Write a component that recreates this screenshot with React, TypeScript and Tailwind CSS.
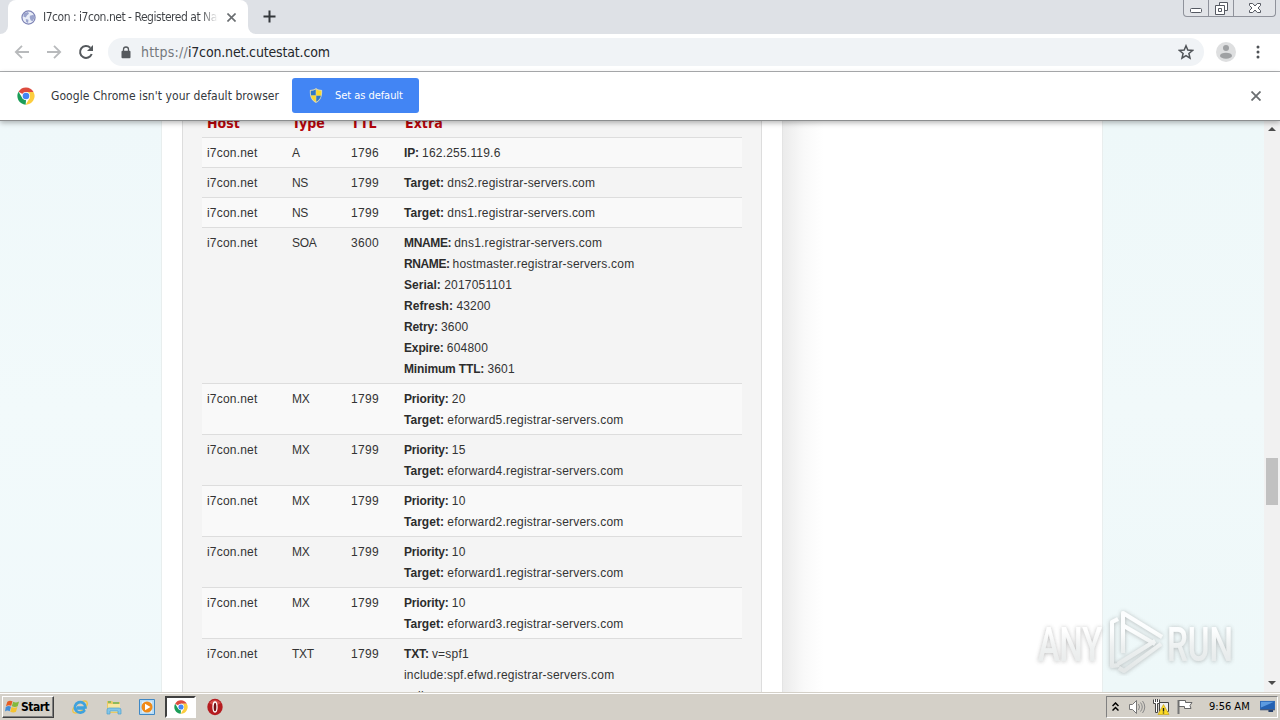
import type { ReactNode } from "react";

type Entry = { label?: string; value: string };

const records: { type: string; ttl: string; extra: Entry[] }[] = [
  { type: "A", ttl: "1796", extra: [{ label: "IP:", value: "162.255.119.6" }] },
  { type: "NS", ttl: "1799", extra: [{ label: "Target:", value: "dns2.registrar-servers.com" }] },
  { type: "NS", ttl: "1799", extra: [{ label: "Target:", value: "dns1.registrar-servers.com" }] },
  {
    type: "SOA",
    ttl: "3600",
    extra: [
      { label: "MNAME:", value: "dns1.registrar-servers.com" },
      { label: "RNAME:", value: "hostmaster.registrar-servers.com" },
      { label: "Serial:", value: "2017051101" },
      { label: "Refresh:", value: "43200" },
      { label: "Retry:", value: "3600" },
      { label: "Expire:", value: "604800" },
      { label: "Minimum TTL:", value: "3601" },
    ],
  },
  ...[
    ["20", "eforward5"],
    ["15", "eforward4"],
    ["10", "eforward2"],
    ["10", "eforward1"],
    ["10", "eforward3"],
  ].map(([priority, host]) => ({
    type: "MX",
    ttl: "1799",
    extra: [
      { label: "Priority:", value: priority },
      { label: "Target:", value: `${host}.registrar-servers.com` },
    ],
  })),
  {
    type: "TXT",
    ttl: "1799",
    extra: [
      { label: "TXT:", value: "v=spf1" },
      { value: "include:spf.efwd.registrar-servers.com" },
      { value: "~all" },
    ],
  },
];

const labelTracking: Record<string, string> = {
  "MNAME:": "tracking-[-0.35px]",
  "RNAME:": "tracking-[-0.4px]",
  "Target:": "tracking-[0.02px]",
  "Serial:": "tracking-[0.02px]",
  "Refresh:": "tracking-[0.04px]",
};

const ChromeLogo = ({ className }: { className?: string }) => (
  <svg viewBox="0 0 24 24" className={className}>
    <path d="M12 12 2 6.3A11.5 11.5 0 0 1 22 6.5H12z" fill="#dd4b3e" />
    <path d="M12 6.5h10A11.5 11.5 0 0 1 11.5 23.5L17 14.5z" fill="#fccd3f" />
    <path d="M2 6.3 7.2 15l4.8 2.5-.5 6A11.500 11.500 0 0 1 2 6.300z" fill="#1b9d58" />
    <circle cx="12" cy="12" r="5.4" fill="#fff" />
    <circle cx="12" cy="12" r="4.4" fill="#4486f4" />
  </svg>
);

const Cross = ({ className }: { className?: string }) => (
  <svg viewBox="0 0 10 10" className={className} fill="none" stroke="#6a6e71" strokeWidth="1.8">
    <path d="m.5.5 9 9M9.500.5l-9 9" />
  </svg>
);

const TabStrip = () => (
  <div className="flex h-[34px] shrink-0 justify-between bg-[#dee1e6]">
    <div className="flex">
      <div className="flex w-2 flex-col justify-end bg-white">
        <div className="h-full rounded-br-lg bg-[#dee1e6]" />
      </div>
      <div className="flex w-60 items-center rounded-t-lg bg-white pl-[13px]">
        <svg viewBox="0 0 16 16" className="h-[15px] w-[15px] shrink-0">
          <circle cx="8" cy="8" r="7" fill="#e9edf7" stroke="#7d83b5" strokeWidth="1.3" />
          <path d="M3 3.5 7.5 2l1 2-2 1.5L5 8 2.5 7zM9.5 6l4-1 .8 3.5-2 3.5-2-1-1-3zM5 9.5l3 1-.5 3.3-2-1z" fill="#9aa3cc" />
        </svg>
        <div className="ml-[7px] w-[175px] overflow-hidden whitespace-nowrap bg-linear-to-r from-[#3f4246] from-90% to-transparent bg-clip-text font-['DejaVu_Sans_Condensed',sans-serif] text-[12px] tracking-[-0.48px] text-transparent">
          I7con : i7con.net - Registered at Namecheap
        </div>
        <Cross className="ml-[9px] h-[9px] w-[9px]" />
      </div>
      <div className="w-2 bg-white">
        <div className="h-full rounded-bl-lg bg-[#dee1e6]" />
      </div>
      <svg viewBox="0 0 13 13" className="ml-[7px] mt-[10px] h-[13px] w-[13px]" stroke="#33373b" strokeWidth="2">
        <path d="M6.500 0.500v12M0.500 6.500h12" />
      </svg>
    </div>
    <div className="mr-[4px] flex h-[17px] w-[93px] rounded-b border border-t-0 border-[#8f929b] bg-[#e2e4e8]">
      <div className="flex w-[25px] justify-center border-r border-[#8f929b]">
        <svg viewBox="0 0 12 16" className="h-4 w-3">
          <rect x="0.5" y="8.500" width="11" height="4" rx="1" fill="#fff" stroke="#555962" />
        </svg>
      </div>
      <div className="flex w-[25px] justify-center border-r border-[#8f929b]">
        <svg viewBox="0 0 13 16" className="h-4 w-[13px]" fill="#fff" stroke="#555962">
          <path d="M4.500 2.500h8v8h-8z" />
          <path d="M.5 5.500h9v9h-9z" />
          <path d="M3.500 8.500h3v3h-3z" />
        </svg>
      </div>
      <div className="flex flex-1 justify-center">
        <svg viewBox="0 0 12 16" className="h-4 w-3">
          <path d="M.5 3.500h3.200L6 6l2.300-2.500h3.200v2L9 8l2.500 2.500v2H8.300L6 10l-2.300 2.500H.5v-2L3 8 .5 5.500z" fill="#fff" stroke="#555962" />
        </svg>
      </div>
    </div>
  </div>
);

const Toolbar = () => (
  <div className="flex h-[38px] shrink-0 items-center border-b border-[#adafb1] bg-white pb-px">
    <svg viewBox="0 0 16 16" className="ml-[14px] h-4 w-4" fill="none" stroke="#b8babc" strokeWidth="1.8">
      <path d="M15 8H2M8 1.800 1.800 8 8 14.200" />
    </svg>
    <svg viewBox="0 0 16 16" className="ml-4 h-4 w-4" fill="none" stroke="#b8babc" strokeWidth="1.8">
      <path d="M1 8h13M8 1.800 14.200 8 8 14.200" />
    </svg>
    <svg viewBox="0 0 16 16" className="ml-4 h-4 w-4" fill="none" stroke="#55595d" strokeWidth="2">
      <path d="M13.700 10A6 6 0 1 1 12.300 3.700" />
      <path d="M15 1v6H9z" fill="#55595d" stroke="none" />
    </svg>
    <div className="ml-[14px] flex h-7 w-[1096px] items-center rounded-full bg-[#f0f3f6] pl-[13px] pr-[10px]">
      <svg viewBox="0 0 10 13" className="h-[13px] w-[10px]">
        <path d="M2.500 5.500V3.500a2.500 2.500 0 0 1 5 0v2" fill="none" stroke="#55595d" strokeWidth="1.3" />
        <rect x="0.500" y="4.800" width="9" height="7.500" rx="1" fill="#55595d" />
      </svg>
      <div className="ml-[10px] whitespace-nowrap font-['DejaVu_Sans_Condensed',sans-serif] text-[14px] tracking-[-0.16px] text-[#24272b]">
        <span className="tracking-[0.22px] text-[#74787d]">https://</span>i7con.net.cutestat.com
      </div>
      <svg viewBox="0 0 16 16" className="ml-auto h-4 w-4" fill="none" stroke="#505458" strokeWidth="1.5">
        <path d="m8 1.800 1.800 4.300 4.700.4-3.600 3 1.100 4.600-4-2.500-4 2.500 1.100-4.600-3.600-3 4.700-.4z" />
      </svg>
    </div>
    <svg viewBox="0 0 20 20" className="ml-3 h-5 w-5">
      <circle cx="10" cy="10" r="10" fill="#dedfe0" />
      <circle cx="10" cy="6" r="3" fill="#9fa1a3" />
      <ellipse cx="10" cy="13.700" rx="6" ry="3" fill="#9fa1a3" />
    </svg>
    <svg viewBox="0 0 4 14" className="ml-[20px] h-[14px] w-1" fill="#4e5256">
      <circle cx="2" cy="2" r="1.500" />
      <circle cx="2" cy="7" r="1.500" />
      <circle cx="2" cy="12" r="1.500" />
    </svg>
  </div>
);

const InfoBar = () => (
  <div className="relative z-10 flex h-[49px] shrink-0 items-center border-b border-[#8c8e8f] bg-white pb-px font-['DejaVu_Sans_Condensed',sans-serif] shadow-[0_2px_5px_rgba(0,0,0,0.28)]">
    <ChromeLogo className="ml-[17px] h-[18px] w-[18px]" />
    <div className="ml-4 w-[241px] whitespace-nowrap text-[12px] tracking-[0.06px] text-[#34383c]">
      Google Chrome isn't your default browser
    </div>
    <button className="flex h-[35px] w-[127px] items-center rounded-[3px] bg-[#4285f4] pl-[17px] text-white">
      <svg viewBox="0 0 14 16" className="h-[15px] w-[14px]">
        <path d="M7 0c2 1.500 4 2 6.500 2C14 9 12 13 7 16 2 13 0 9 .5 2 3 2 5 1.500 7 0z" fill="#d9d7b5" />
        <path d="M6.700 1.600V8H1.700C1.400 6 1.400 4.500 1.500 3c2 0 3.700-.4 5.200-1.400zM7.300 8h5c-.6 3-2.200 5-5 6.700z" fill="#2f78c8" />
        <path d="M7.300 1.600V8h5c.3-2 .3-3.500.2-5-2 0-3.700-.4-5.200-1.400zM6.700 8h-5c.6 3 2.200 5 5 6.700z" fill="#f9d92e" />
      </svg>
      <span className="ml-3 mt-px whitespace-nowrap text-[11px] tracking-[-0.05px]">Set as default</span>
    </button>
    <Cross className="ml-auto mr-[19px] h-[10px] w-[10px]" />
  </div>
);

const columns = "grid grid-cols-[85px_59px_53px_1fr] pl-[5px]";

const DnsTable = () => (
  <div className="-mt-[14px] w-[540px] font-['Liberation_Sans',Arial,sans-serif] text-[12px] leading-[21px] tracking-[0.2px] text-[#333]">
    <div className={`${columns} h-[30px] pt-[6px] font-['DejaVu_Sans_Condensed',Tahoma,sans-serif] text-[14px] font-bold tracking-[0.05px] text-[#b5050b]`}>
      <span>Host</span>
      <span>Type</span>
      <span>TTL</span>
      <span className="pl-px">Extra</span>
    </div>
    {records.map((record, index) => (
      <div key={index} className={`${columns} border-t border-[#ddd] pb-[3px] pt-[5px] ${index % 2 === 0 ? "bg-[#f9f9f9]" : ""}`}>
        <span>i7con.net</span>
        <span className="tracking-[-0.3px]">{record.type}</span>
        <span className="tracking-[0.33px]">{record.ttl}</span>
        <div className="whitespace-nowrap">
          {record.extra.map((entry, i) => (
            <div key={i}>
              {entry.label && (
                <b className={`text-[#2c2c2c] ${labelTracking[entry.label] ?? "tracking-[-0.15px]"}`}>{entry.label} </b>
              )}
              {entry.value}
            </div>
          ))}
        </div>
      </div>
    ))}
  </div>
);

const Watermark = () => (
  <svg viewBox="0 0 204 72" className="absolute left-[1034px] top-[483px] h-[72px] w-[204px]">
    <defs>
      <linearGradient id="fade" gradientUnits="userSpaceOnUse" x1="0" y1="6" x2="0" y2="66">
        <stop offset="0.350" stopColor="#fff" />
        <stop offset="0.600" stopColor="#eef0f0" />
        <stop offset="1" stopColor="#e2e5e5" />
      </linearGradient>
      <filter id="glow" x="-10%" y="-20%" width="120%" height="140%">
        <feDropShadow dx="0" dy="0.5" stdDeviation="2" floodColor="#777" floodOpacity="0.600" />
      </filter>
    </defs>
    <g filter="url(#glow)" opacity="0.850">
      <text x="4" y="57" textLength="64" lengthAdjust="spacingAndGlyphs" fontFamily="Roboto" fontSize="49" fontWeight="500" fill="url(#fade)">ANY</text>
      <text x="133" y="57" textLength="66" lengthAdjust="spacingAndGlyphs" fontFamily="Roboto" fontSize="49" fontWeight="500" fill="url(#fade)">RUN</text>
      <g fill="none" stroke="url(#fade)" strokeWidth="4" strokeLinejoin="round">
        <path d="M84 15 78 18v44l7-1M89 49V9l39 24M90 22l31 18M121 37 84 60M127 40 90 67l-5-3" />
      </g>
    </g>
  </svg>
);

const Scrollbar = () => (
  <div className="flex w-4 flex-col items-center bg-[#f1f1f1]">
    <svg viewBox="0 0 8 4" className="mt-[6px] h-1 w-2"><path d="M0 4 4 0l4 4z" fill="#4c4c4c" /></svg>
    <div className="mt-[327px] h-[47px] w-3 bg-[#c1c1c1]" />
    <svg viewBox="0 0 8 4" className="mb-[7px] mt-auto h-1 w-2"><path d="m0 0 4 4 4-4z" fill="#4c4c4c" /></svg>
  </div>
);

const Page = () => (
  <div className="relative flex min-h-0 flex-1 overflow-hidden bg-[#eff8fa]">
    <div className="w-[162px] border-r border-[#e8eeee] bg-linear-to-b from-[#eff8fa] via-[#f2fafb] to-[#f0f9fb]" />
    <div className="flex w-[940px] bg-white pl-5">
      <div className="w-[580px] border-x border-[#ddd] bg-[#f4f4f4] pl-[19px]">
        <DnsTable />
      </div>
      <div className="w-5" />
      <div className="w-[42px] border-l border-[#e4e4e4] bg-linear-to-r from-[#ebebeb] via-[#f9f9f9] to-white" />
    </div>
    <div className="flex-1 border-l border-[#e9eeee] bg-linear-to-b from-[#eef8f9] via-[#f1f9fa] to-[#eef8f9]" />
    <Scrollbar />
    <Watermark />
  </div>
);

const Icon = ({ className, children }: { className?: string; children: ReactNode }) => (
  <svg viewBox="0 0 18 18" className={`h-[18px] w-[18px] shrink-0 ${className ?? ""}`}>{children}</svg>
);

const Taskbar = () => (
  <div className="flex h-7 shrink-0 items-center border-t border-[#d4d0c8] bg-[#d4d0c8] font-['DejaVu_Sans_Condensed',sans-serif] shadow-[inset_0_1px_0_#fff]">
    <div className="ml-[2px] flex h-[22px] w-[52px] items-center border border-b-[#404040] border-l-white border-r-[#404040] border-t-white shadow-[inset_-1px_-1px_0_#808080]">
      <svg viewBox="0 0 16 16" className="ml-[2px] h-[15px] w-[15px]">
        <path d="M2.500 3C4.500 1.500 6 1.600 8 2.500L6.600 7.300C4.700 6.500 3.200 6.500 1 7.800z" fill="#e65c22" />
        <path d="M8.700 3c2 .9 4 .9 6.300-.3l-1.500 5.100c-2 1.200-4 1-6.200 0z" fill="#83b93b" />
        <path d="M.8 8.600C3 7.300 4.500 7.300 6.400 8.200L5 13C3.200 12.200 1.800 12 0 13.300z" fill="#428dd7" />
        <path d="M7 8.500c2.200 1 4.200 1 6.200 0l-1.500 5c-2 1.200-4 1-6.100 0z" fill="#f5c331" />
      </svg>
      <b className="ml-[1px] text-[12px] tracking-[-0.5px] text-black">Start</b>
    </div>
    <Icon className="ml-[17px]">
      <ellipse cx="9" cy="9" rx="8.500" ry="4" fill="none" stroke="#edc44b" strokeWidth="1.500" transform="rotate(-35 9 9)" />
      <path d="M14 10.500H5.500M13.800 12A5.300 5.300 0 1 1 14.500 9.500H6" fill="none" stroke="#3fa2dd" strokeWidth="2.700" />
    </Icon>
    <Icon className="ml-4">
      <path d="M2 3h5l1 1h7v11H2z" fill="#e9c965" />
      <path d="M3 6h12v8H3z" fill="#f8e7a1" />
      <path d="M3 4h3M8 5h6" stroke="#6fb45b" strokeWidth="1.500" />
      <path d="M2 16v-4q0-2 2-2h10q2 0 2 2v4h-3v-3H5v3z" fill="#83c5e8" stroke="#4ca0cf" strokeWidth=".7" />
    </Icon>
    <Icon className="ml-[15px]">
      <path d="M1.500 1.500h15v15h-15z" fill="#b8dcf5" stroke="#3f88c5" />
      <path d="M4 3.500h10v11H4z" fill="#fff" opacity=".6" />
      <circle cx="9" cy="9" r="5.500" fill="#ef8a18" />
      <path d="m7 5.800 5.500 3.200L7 12.200z" fill="#fff" />
    </Icon>
    <div className="ml-[9px] flex h-[22px] w-[31px] items-center justify-center border-2 border-b-white border-l-[#404040] border-r-white border-t-[#404040] bg-white">
      <ChromeLogo className="h-[14px] w-[14px]" />
    </div>
    <Icon className="ml-[10px]">
      <ellipse cx="9" cy="9" rx="7.700" ry="8.200" fill="#b51c20" />
      <path d="M3 5q6-6 12 0-6 4-12 0" fill="#e96d66" opacity=".6" />
      <ellipse cx="9" cy="9" rx="2" ry="5" fill="#711015" stroke="#fff" strokeWidth="1.300" />
    </Icon>
    <div className="ml-auto mr-[2px] flex h-[22px] w-[172px] items-center border border-b-white border-l-[#808080] border-r-white border-t-[#808080]">
      <svg viewBox="0 0 7 9" className="ml-[5px] h-[9px] w-[7px]" fill="none" stroke="#000" strokeWidth="1.500">
        <path d="m.5 4 3-3 3 3M.5 8.500l3-3 3 3" />
      </svg>
      <Icon className="ml-[9px]">
        <path d="M1.500 6.500h3l4-4v13l-4-4h-3z" fill="#fff" stroke="#777" />
        <path d="M10.500 6q2 3 0 6M12.500 4.500q3.500 4.500 0 9M14.500 3q4.500 6 0 12" fill="none" stroke="#888" />
      </Icon>
      <Icon className="ml-[6px]">
        <path d="M7.500 4.500h9v9h-9z" fill="#eee" stroke="#444" />
        <path d="M1.500 1.500v4h2v9h2v-9h2v-4M3.500 1v3M5.500 1v3" fill="#fff" stroke="#444" />
        <path d="m11.500 6.500 5.500 10H6z" fill="#fddc25" stroke="#c7a41c" strokeWidth=".7" />
        <path d="M11.500 10v3.500M11.500 14.500v1" stroke="#222" strokeWidth="1.400" />
      </Icon>
      <Icon className="ml-[6px]">
        <path d="M2.500 2v14" stroke="#777" strokeWidth="2" />
        <path d="M3 2.500h6.500v2H16l-2 3 1 3H8.500v-2H3z" fill="#fff" stroke="#666" />
      </Icon>
      <span className="ml-[15px] mt-[2px] whitespace-nowrap text-[11px] text-black">9:56 AM</span>
      <svg viewBox="0 0 16 14" className="ml-auto mr-[2px] h-[13px] w-[15px]">
        <path d="M0 1h16v9H0z" fill="#2462b3" />
        <path d="M1 2h14L1 8z" fill="#5c9be0" />
        <path d="M0 10h16v1H0zM9 11h5v2H9z" fill="#27406c" />
      </svg>
    </div>
  </div>
);

const App = () => {
  return (
    <div className="flex h-[720px] w-[1280px] flex-col overflow-hidden bg-white">
      <TabStrip />
      <Toolbar />
      <InfoBar />
      <Page />
      <Taskbar />
    </div>
  );
};

export default App;
